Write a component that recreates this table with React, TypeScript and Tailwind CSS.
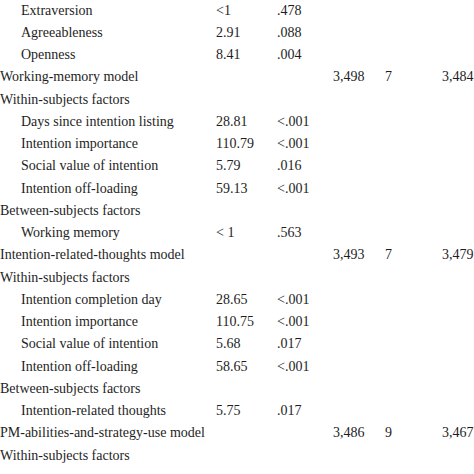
import React from "react";

type Row = { label: string; indent?: boolean; f?: string; p?: string; a?: string; b?: string; c?: string };

const rows: Row[] = [
  { label: "Extraversion", indent: true, f: "<1", p: ".478" },
  { label: "Agreeableness", indent: true, f: "2.91", p: ".088" },
  { label: "Openness", indent: true, f: "8.41", p: ".004" },
  { label: "Working-memory model", a: "3,498", b: "7", c: "3,484" },
  { label: "Within-subjects factors" },
  { label: "Days since intention listing", indent: true, f: "28.81", p: "<.001" },
  { label: "Intention importance", indent: true, f: "110.79", p: "<.001" },
  { label: "Social value of intention", indent: true, f: "5.79", p: ".016" },
  { label: "Intention off-loading", indent: true, f: "59.13", p: "<.001" },
  { label: "Between-subjects factors" },
  { label: "Working memory", indent: true, f: "< 1", p: ".563" },
  { label: "Intention-related-thoughts model", a: "3,493", b: "7", c: "3,479" },
  { label: "Within-subjects factors" },
  { label: "Intention completion day", indent: true, f: "28.65", p: "<.001" },
  { label: "Intention importance", indent: true, f: "110.75", p: "<.001" },
  { label: "Social value of intention", indent: true, f: "5.68", p: ".017" },
  { label: "Intention off-loading", indent: true, f: "58.65", p: "<.001" },
  { label: "Between-subjects factors" },
  { label: "Intention-related thoughts", indent: true, f: "5.75", p: ".017" },
  { label: "PM-abilities-and-strategy-use model", a: "3,486", b: "9", c: "3,467" },
  { label: "Within-subjects factors" },
];

export default function App() {
  return (
    <div className="w-[474px] h-[474px] overflow-hidden bg-white text-[#1e1e1e] text-[14px] font-['Liberation_Serif']">
      <div className="flex flex-col mt-[-0.5px]">
        {rows.map((r, i) => (
          <div key={i} className="flex h-[22.25px] leading-[22.25px] whitespace-nowrap font-['Liberation_Serif']">
            <div className={r.indent ? "w-[216px] shrink-0 pl-[21px] font-['Liberation_Serif']" : "w-[216px] shrink-0 font-['Liberation_Serif']"}>{r.label}</div>
            <div className="w-[61px] shrink-0 font-['Liberation_Serif']">{r.f ?? ""}</div>
            <div className="w-[56px] shrink-0 font-['Liberation_Serif']">{r.p ?? ""}</div>
            <div className="w-[52px] shrink-0 font-['Liberation_Serif']">{r.a ?? ""}</div>
            <div className="w-[57px] shrink-0 font-['Liberation_Serif']">{r.b ?? ""}</div>
            <div className="shrink-0 font-['Liberation_Serif']">{r.c ?? ""}</div>
          </div>
        ))}
      </div>
    </div>
  );
}
